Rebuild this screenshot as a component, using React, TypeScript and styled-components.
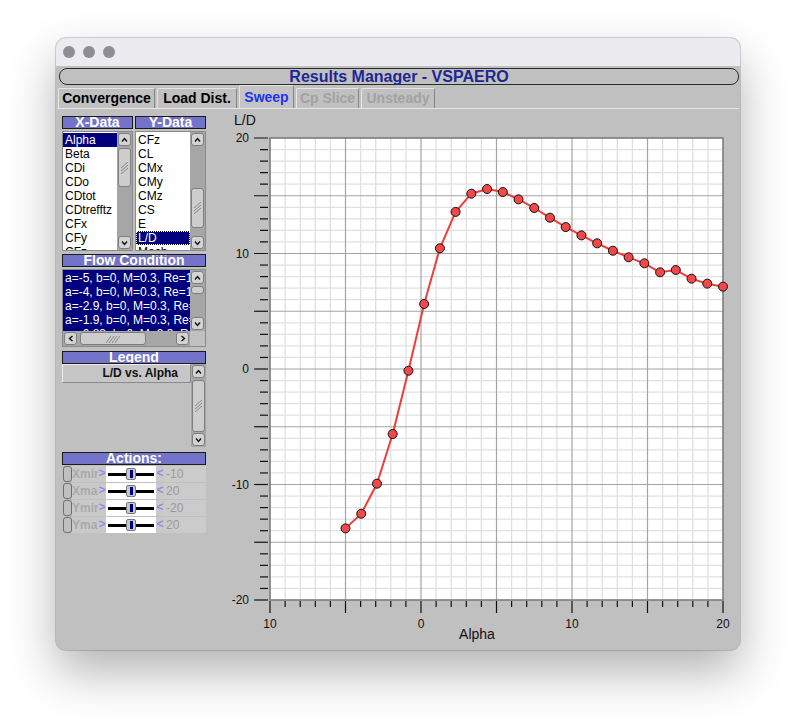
import React from 'react';
import styled, { createGlobalStyle } from 'styled-components';

const GlobalStyle = createGlobalStyle`
  html, body {
    margin: 0;
    padding: 0;
    background: #ffffff;
  }
  body {
    font-family: "Liberation Sans", Arial, sans-serif;
  }
`;

const FONT = '"Liberation Sans", Arial, sans-serif';

/**
 * Window chrome
 */

const Page = styled.div`
  width: 796px;
  height: 725px;
  box-sizing: border-box;
  padding: 38px 0 0 56px;
`;

const Window = styled.div`
  width: 684px;
  height: 612px;
  border-radius: 10px;
  overflow: hidden;
  display: flex;
  flex-direction: column;
  background: #c0c0c0;
  box-shadow: 0 0 0 1px rgba(0, 0, 0, 0.16), 0 22px 48px rgba(0, 0, 0, 0.3);
`;

const TitleBar = styled.div`
  flex: none;
  height: 28px;
  display: flex;
  align-items: center;
  gap: 8px;
  padding-left: 7px;
  background: #ecebf0;
`;

const Light = styled.span`
  width: 12px;
  height: 12px;
  border-radius: 50%;
  background: #8f8d94;
`;

const Body = styled.div`
  flex: 1;
  display: flex;
  flex-direction: column;
  min-height: 0;
`;

const HeaderBar = styled.div`
  margin: 2px 1px 0 3px;
  height: 15px;
  border: 1.5px solid #2b2b2b;
  border-radius: 8px;
  display: flex;
  align-items: center;
  justify-content: center;
  font: bold 16px ${FONT};
  color: #1d2793;
`;

/**
 * Tabs
 */

const TabRow = styled.div`
  display: flex;
  align-items: flex-end;
  gap: 2px;
  height: 22px;
  margin-top: 1px;
  padding-left: 2px;
`;

type TabState = 'normal' | 'active' | 'disabled';

const Tab = styled.div<{ $w: number; $state: TabState }>`
  width: ${p => p.$w}px;
  height: ${p => (p.$state === 'active' ? 23 : 20)}px;
  box-sizing: border-box;
  border-top: 1px solid #e6e6e6;
  border-left: 1px solid #e6e6e6;
  border-right: 1px solid #858585;
  border-radius: 2px 2px 0 0;
  background: ${p => (p.$state === 'active' ? '#c4c4c4' : '#c0c0c0')};
  font: bold 14px/${p => (p.$state === 'active' ? 22 : 19)}px ${FONT};
  text-align: center;
  white-space: nowrap;
  color: ${p =>
    p.$state === 'active' ? '#1c35ee' : p.$state === 'disabled' ? '#a2a2a2' : '#000'};
`;

const TabPanel = styled.div`
  flex: 1;
  display: flex;
  gap: 9px;
  margin: 0 1px 2px 1px;
  padding: 3px 0 0 5px;
  border-top: 1px solid #e6e6e6;
  border-bottom: 1px solid #8e8e8e;
`;

/**
 * Left panel
 */

const LeftPanel = styled.div`
  width: 144px;
  flex: none;
  padding-top: 4px;
  display: flex;
  flex-direction: column;
`;

const Pair = styled.div`
  display: flex;
  gap: 2px;
`;

const SectionHeader = styled.div<{ $mt?: number }>`
  flex: 1;
  height: 11px;
  margin-top: ${p => p.$mt || 0}px;
  border: 1px solid #1b1b1b;
  background: #7273c9;
  color: #fff;
  font: bold 14px/11px ${FONT};
  text-align: center;
  overflow: hidden;
  white-space: nowrap;
`;

const ListBox = styled.div<{ $h: number; $mt?: number }>`
  flex: 1;
  height: ${p => p.$h}px;
  margin-top: ${p => p.$mt || 0}px;
  box-sizing: border-box;
  border: 1px solid #8a8a8a;
  background: #fff;
  display: flex;
  min-width: 0;
`;

const Items = styled.div<{ $navy?: boolean }>`
  flex: 1;
  min-width: 0;
  overflow: hidden;
  padding-top: 1px;
  background: ${p => (p.$navy ? '#00007e' : '#fff')};
`;

const Item = styled.div<{ $sel?: boolean; $focus?: boolean }>`
  height: 14px;
  padding: 0 2px;
  font: 12px/14px ${FONT};
  white-space: nowrap;
  color: ${p => (p.$sel ? '#fff' : '#000')};
  background: ${p => (p.$sel ? '#00007e' : 'transparent')};
  outline: ${p => (p.$focus ? '1px dotted #ffffff' : 'none')};
  outline-offset: -1px;
  box-shadow: ${p => (p.$focus ? 'inset 0 0 0 1px #000' : 'none')};
`;

/* scrollbars */

const VScroll = styled.div`
  width: 15px;
  flex: none;
  display: flex;
  flex-direction: column;
  background: #a6a6a6;
`;

const HScroll = styled.div`
  flex: 1;
  height: 15px;
  display: flex;
  background: #a6a6a6;
`;

const ScrollBtn = styled.div`
  width: 13px;
  height: 13px;
  flex: none;
  margin: 1px;
  box-sizing: border-box;
  border: 1px solid #7e7e7e;
  border-radius: 3px;
  background: #d3d3d3;
  display: flex;
  align-items: center;
  justify-content: center;
`;

const Track = styled.div<{ $row?: boolean }>`
  flex: 1;
  display: flex;
  flex-direction: ${p => (p.$row ? 'row' : 'column')};
`;

const Thumb = styled.div<{ $offset: number; $size: number; $row?: boolean }>`
  flex: none;
  box-sizing: border-box;
  ${p =>
    p.$row
      ? `margin-left: ${p.$offset}px; width: ${p.$size}px; height: 13px; margin-top: 1px;`
      : `margin-top: ${p.$offset}px; height: ${p.$size}px; width: 13px; margin-left: 1px;`}
  border: 1px solid #7e7e7e;
  border-radius: 3px;
  background: #cdcdcd;
  display: flex;
  align-items: center;
  justify-content: center;
  overflow: hidden;
`;

const Corner = styled.div`
  width: 15px;
  height: 15px;
  background: #c0c0c0;
`;

const Chevron = ({ dir }: { dir: 'up' | 'down' | 'left' | 'right' }) => {
  const d = {
    up: 'M1 4.5L3.5 1.5L6 4.5',
    down: 'M1 1.5L3.5 4.5L6 1.5',
    left: 'M4.5 1L1.5 3.5L4.5 6',
    right: 'M1.5 1L4.5 3.5L1.5 6',
  }[dir];
  const vertical = dir === 'up' || dir === 'down';
  return (
    <svg width={vertical ? 7 : 6} height={vertical ? 6 : 7} viewBox={vertical ? '0 0 7 6' : '0 0 6 7'}>
      <path d={d} fill="none" stroke="#111" strokeWidth="1.4" />
    </svg>
  );
};

const GripV = () => (
  <svg width="9" height="12" viewBox="0 0 9 12">
    <path d="M1 6L8 0M1 9L8 3M1 12L8 6" stroke="#8a8a8a" strokeWidth="1" />
  </svg>
);

const GripH = () => (
  <svg width="14" height="8" viewBox="0 0 14 8">
    <path d="M0 8L5 1M3 8L8 1M6 8L11 1M9 8L14 1" stroke="#8a8a8a" strokeWidth="1" />
  </svg>
);

const VScrollBar = ({ offset, size }: { offset: number; size: number }) => (
  <VScroll>
    <ScrollBtn>
      <Chevron dir="up" />
    </ScrollBtn>
    <Track>
      <Thumb $offset={offset} $size={size}>
        {size > 20 && <GripV />}
      </Thumb>
    </Track>
    <ScrollBtn>
      <Chevron dir="down" />
    </ScrollBtn>
  </VScroll>
);

const FlowBox = styled.div`
  height: 78px;
  margin-top: 2px;
  box-sizing: border-box;
  border: 1px solid #8a8a8a;
  display: flex;
  flex-direction: column;
`;

const FlowTop = styled.div`
  flex: 1;
  display: flex;
  min-height: 0;
`;

const FlowBottom = styled.div`
  display: flex;
`;

/* legend */

const LegendBox = styled.div`
  height: 83px;
  display: flex;
`;

const LegendList = styled.div`
  flex: 1;
`;

const LegendButton = styled.div`
  height: 19px;
  box-sizing: border-box;
  border-top: 1px solid #ececec;
  border-left: 1px solid #ececec;
  border-bottom: 1px solid #8a8a8a;
  border-right: 1px solid #8a8a8a;
  background: #c6c6c6;
  padding-right: 12px;
  text-align: right;
  font: bold 12px/17px ${FONT};
  color: #111;
`;

/* actions */

const ActionList = styled.div`
  display: flex;
  flex-direction: column;
  gap: 1px;
  margin-top: 1px;
`;

const ActionRow = styled.div`
  height: 16px;
  display: flex;
`;

const CheckBox = styled.div`
  width: 9px;
  margin-left: 1px;
  box-sizing: border-box;
  border: 1px solid #6e6e6e;
  border-radius: 3px;
`;

const ActionLabel = styled.div`
  width: 26px;
  overflow: hidden;
  white-space: nowrap;
  background: #c9c9c9;
  font: bold 12px/16px ${FONT};
  color: #a9a9a9;
`;

const Nudge = styled.div`
  width: 8px;
  background: #c9c9c9;
  font: bold 12px/15px ${FONT};
  color: #8f8fe6;
  text-align: center;
`;

const SliderTrack = styled.div`
  width: 50px;
  display: flex;
  align-items: center;
  justify-content: center;
  background: linear-gradient(#000, #000) center / 46px 3px no-repeat, #fff;
`;

const SliderThumb = styled.div`
  width: 10px;
  height: 12px;
  box-sizing: border-box;
  border: 1px solid #7a7a7a;
  border-radius: 2px;
  background: linear-gradient(#00007e, #00007e) center / 3px 8px no-repeat, #c8c8c8;
`;

const ValueBox = styled.div`
  flex: 1;
  padding-left: 2px;
  background: #cbcbcb;
  font: 12px/16px ${FONT};
  color: #9a9a9a;
`;

/**
 * Chart
 */

const ChartPanel = styled.div`
  flex: none;
  width: 522px;
`;

const PX = 55;
const PY = 26;
const PW = 453;
const PH = 462;
const sx = (a: number) => PX + ((a + 10) * PW) / 30;
const sy = (v: number) => PY + ((20 - v) * PH) / 40;

const LD = [
  -13.8, -12.53, -9.93, -5.63, -0.15, 5.63, 10.45, 13.6, 15.18, 15.58, 15.32, 14.69, 13.94,
  13.1, 12.29, 11.57, 10.88, 10.24, 9.67, 9.15, 8.37, 8.57, 7.82, 7.39, 7.13,
];
const POINTS = LD.map((v, i) => [sx(-5 + (i * 25) / 24), sy(v)]);

const range = (a: number, b: number) => Array.from({ length: b - a + 1 }, (_, i) => a + i);

const Chart = () => (
  <svg width="522" height="534" viewBox="0 0 522 534" fontFamily={FONT}>
    <text x="19" y="13" fontSize="14" fill="#111">
      L/D
    </text>
    <rect x={PX} y={PY} width={PW} height={PH} fill="#fff" />
    {range(-9, 19)
      .filter(a => a % 5 !== 0)
      .map(a => (
        <line key={`vx${a}`} x1={sx(a)} x2={sx(a)} y1={PY} y2={PY + PH} stroke="#e0e0e0" strokeWidth="1.3" />
      ))}
    {range(-19, 19)
      .filter(v => v % 5 !== 0)
      .map(v => (
        <line key={`hy${v}`} x1={PX} x2={PX + PW} y1={sy(v)} y2={sy(v)} stroke="#e0e0e0" strokeWidth="1.3" />
      ))}
    {[-5, 0, 5, 10, 15].map(a => (
      <line key={`VX${a}`} x1={sx(a)} x2={sx(a)} y1={PY} y2={PY + PH} stroke="#a4a4a4" strokeWidth="1.2" />
    ))}
    {[-15, -10, -5, 0, 5, 10, 15].map(v => (
      <line key={`HY${v}`} x1={PX} x2={PX + PW} y1={sy(v)} y2={sy(v)} stroke="#a4a4a4" strokeWidth="1.2" />
    ))}
    <rect x={PX} y={PY} width={PW} height={PH} fill="none" stroke="#7c7c7c" strokeWidth="1.6" />

    {range(-20, 20).map(v => (
      <line
        key={`ty${v}`}
        x1={v % 5 === 0 ? 39 : 45}
        x2={PX - 2}
        y1={sy(v)}
        y2={sy(v)}
        stroke="#111"
        strokeWidth="1.2"
      />
    ))}
    {[20, 10, 0, -10, -20].map(v => (
      <text key={`ly${v}`} x="34" y={sy(v) + 4} fontSize="12" textAnchor="end" fill="#111">
        {v}
      </text>
    ))}
    {range(-10, 20).map(a => (
      <line
        key={`tx${a}`}
        x1={sx(a)}
        x2={sx(a)}
        y1={PY + PH + 1}
        y2={a % 5 === 0 ? PY + PH + 13 : PY + PH + 7}
        stroke="#111"
        strokeWidth="1.2"
      />
    ))}
    {[
      [-10, '10'],
      [0, '0'],
      [10, '10'],
      [20, '20'],
    ].map(([a, label]) => (
      <text key={`lx${a}`} x={sx(a as number)} y="516" fontSize="12" textAnchor="middle" fill="#111">
        {label}
      </text>
    ))}
    <text x="262" y="527" fontSize="14" textAnchor="middle" fill="#111">
      Alpha
    </text>

    <polyline
      points={POINTS.map(p => p.join(',')).join(' ')}
      fill="none"
      stroke="#f03c3c"
      strokeWidth="2"
      strokeLinejoin="round"
    />
    {POINTS.map(([x, y], i) => (
      <circle key={i} cx={x} cy={y} r="4.5" fill="#f24848" stroke="#111" strokeWidth="1" />
    ))}
  </svg>
);

/**
 * Data
 */

const X_ITEMS = ['Alpha', 'Beta', 'CDi', 'CDo', 'CDtot', 'CDtrefftz', 'CFx', 'CFy', 'CFz'];
const Y_ITEMS = ['CFz', 'CL', 'CMx', 'CMy', 'CMz', 'CS', 'E', 'L/D', 'Mach'];
const FLOW_ITEMS = [
  'a=-5, b=0, M=0.3, Re=1e+07',
  'a=-4, b=0, M=0.3, Re=1e+07',
  'a=-2.9, b=0, M=0.3, Re=1e+07',
  'a=-1.9, b=0, M=0.3, Re=1e+07',
  'a=-0.83, b=0, M=0.3, Re=1e+07',
];
const ACTIONS = [
  ['Xmin', '-10'],
  ['Xmax', '20'],
  ['Ymin', '-20'],
  ['Ymax', '20'],
];
const TABS: [string, number, TabState][] = [
  ['Convergence', 97, 'normal'],
  ['Load Dist.', 80, 'normal'],
  ['Sweep', 55, 'active'],
  ['Cp Slice', 63, 'disabled'],
  ['Unsteady', 74, 'disabled'],
];

export default function App() {
  return (
    <>
      <GlobalStyle />
      <Page>
        <Window>
          <TitleBar>
            <Light />
            <Light />
            <Light />
          </TitleBar>
          <Body>
            <HeaderBar>Results Manager - VSPAERO</HeaderBar>
            <TabRow>
              {TABS.map(([label, w, state]) => (
                <Tab key={label} $w={w} $state={state}>
                  {label}
                </Tab>
              ))}
            </TabRow>
            <TabPanel>
              <LeftPanel>
                <Pair>
                  <SectionHeader>X-Data</SectionHeader>
                  <SectionHeader>Y-Data</SectionHeader>
                </Pair>
                <Pair>
                  <ListBox $h={120} $mt={2}>
                    <Items>
                      {X_ITEMS.map(t => (
                        <Item key={t} $sel={t === 'Alpha'}>
                          {t}
                        </Item>
                      ))}
                    </Items>
                    <VScrollBar offset={1} size={39} />
                  </ListBox>
                  <ListBox $h={120} $mt={2}>
                    <Items>
                      {Y_ITEMS.map(t => (
                        <Item key={t} $sel={t === 'L/D'} $focus={t === 'L/D'}>
                          {t}
                        </Item>
                      ))}
                    </Items>
                    <VScrollBar offset={41} size={40} />
                  </ListBox>
                </Pair>

                <Pair>
                  <SectionHeader $mt={3}>Flow Condition</SectionHeader>
                </Pair>
                <FlowBox>
                  <FlowTop>
                    <Items $navy>
                      {FLOW_ITEMS.map(t => (
                        <Item key={t} $sel>
                          {t}
                        </Item>
                      ))}
                    </Items>
                    <VScrollBar offset={1} size={8} />
                  </FlowTop>
                  <FlowBottom>
                    <HScroll>
                      <ScrollBtn>
                        <Chevron dir="left" />
                      </ScrollBtn>
                      <Track $row>
                        <Thumb $row $offset={2} $size={66}>
                          <GripH />
                        </Thumb>
                      </Track>
                      <ScrollBtn>
                        <Chevron dir="right" />
                      </ScrollBtn>
                    </HScroll>
                    <Corner />
                  </FlowBottom>
                </FlowBox>

                <Pair>
                  <SectionHeader $mt={4}>Legend</SectionHeader>
                </Pair>
                <LegendBox>
                  <LegendList>
                    <LegendButton>L/D vs. Alpha</LegendButton>
                  </LegendList>
                  <VScrollBar offset={1} size={52} />
                </LegendBox>

                <Pair>
                  <SectionHeader $mt={5}>Actions:</SectionHeader>
                </Pair>
                <ActionList>
                  {ACTIONS.map(([label, value]) => (
                    <ActionRow key={label}>
                      <CheckBox />
                      <ActionLabel>{label}</ActionLabel>
                      <Nudge>&gt;</Nudge>
                      <SliderTrack>
                        <SliderThumb />
                      </SliderTrack>
                      <Nudge>&lt;</Nudge>
                      <ValueBox>{value}</ValueBox>
                    </ActionRow>
                  ))}
                </ActionList>
              </LeftPanel>
              <ChartPanel>
                <Chart />
              </ChartPanel>
            </TabPanel>
          </Body>
        </Window>
      </Page>
    </>
  );
}
